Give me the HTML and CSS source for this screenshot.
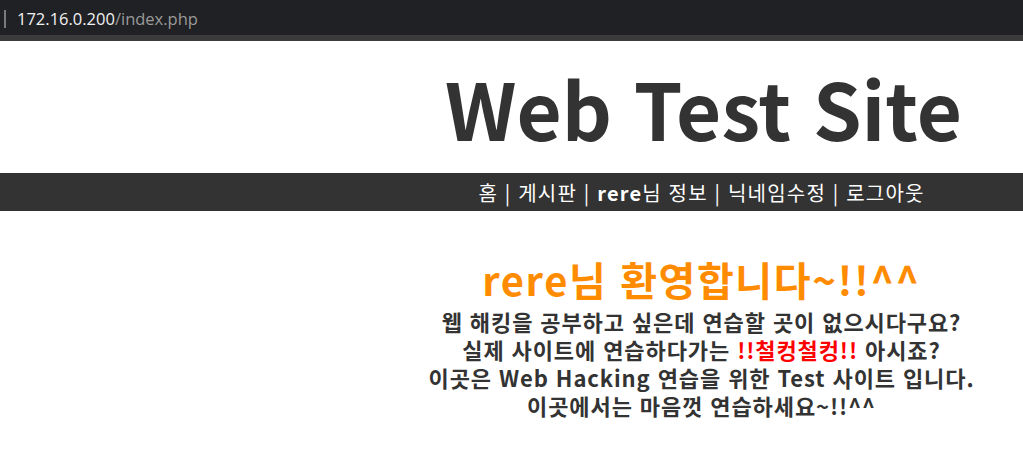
FILE: index.html
```html
<!DOCTYPE html>
<html lang="ko">
<head>
<meta charset="utf-8">
<title>Web Test Site</title>
<link rel="stylesheet" href="styles.css">
</head>
<body>
<div class="browserbar">
  <span class="caret"></span>
  <span class="url"><span class="host">172.16.0.200</span><span class="path">/index.php</span></span>
</div>
<div class="browserstrip"></div>
<header class="header">
  <h1 class="title">Web Test Site</h1>
</header>
<nav class="nav">
  <div class="nav-inner">홈 | 게시판 | <b>rere</b>님 정보 | 닉네임수정 | 로그아웃</div>
</nav>
<main class="main">
  <div class="content">
    <h2 class="welcome">rere님 환영합니다~!!^^</h2>
    <p class="intro">웹 해킹을 공부하고 싶은데 연습할 곳이 없으시다구요?<br>
    실제 사이트에 연습하다가는 <span class="red">!!철컹철컹!!</span> 아시죠?<br>
    이곳은 Web Hacking 연습을 위한 Test 사이트 입니다.<br>
    이곳에서는 마음껏 연습하세요~!!^^</p>
  </div>
</main>
</body>
</html>
```
FILE: styles.css
```css
html, body {
  margin: 0;
  padding: 0;
  background: #fff;
  font-family: "Noto Sans CJK KR", "Noto Sans", sans-serif;
  color: #333;
}
.browserbar {
  height: 35px;
  background: #202124;
  display: flex;
  align-items: center;
  gap: 11px;
  padding-left: 4px;
  padding-top: 2px;
  box-sizing: border-box;
  font-family: "Open Sans", "Noto Sans", sans-serif;
  font-size: 16.5px;
}
.caret {
  width: 2px;
  height: 18px;
  background: #7a7a7a;
}
.host { color: #f1f1f1; }
.path { color: #9a9a9a; }
.browserstrip {
  height: 6px;
  background: #3b3b3b;
}
.header {
  height: 132px;
  display: flex;
  justify-content: flex-end;
  align-items: center;
  padding-right: 61px;
}
.title {
  margin: 0;
  font-size: 78px;
  font-weight: bold;
  color: #333;
  line-height: 1;
  letter-spacing: 0;
}
.nav {
  background: #333;
  height: 38px;
  display: flex;
  align-items: center;
  padding-left: 380px;
}
.nav-inner {
  flex: 1;
  text-align: center;
  color: #fff;
  font-size: 20px;
  letter-spacing: 1.2px;
}
.nav-inner b { font-weight: bold; }
.main {
  padding-left: 380px;
  padding-top: 45px;
}
.content {
  text-align: center;
}
.welcome {
  margin: 0 0 5px;
  font-size: 40px;
  line-height: 46px;
  font-weight: bold;
  color: #ff8c00;
  letter-spacing: 1.6px;
}
.intro {
  margin: 0;
  font-size: 22px;
  line-height: 28px;
  font-weight: bold;
  color: #333;
  letter-spacing: 0.9px;
}
.red { color: #ff0000; }
```
